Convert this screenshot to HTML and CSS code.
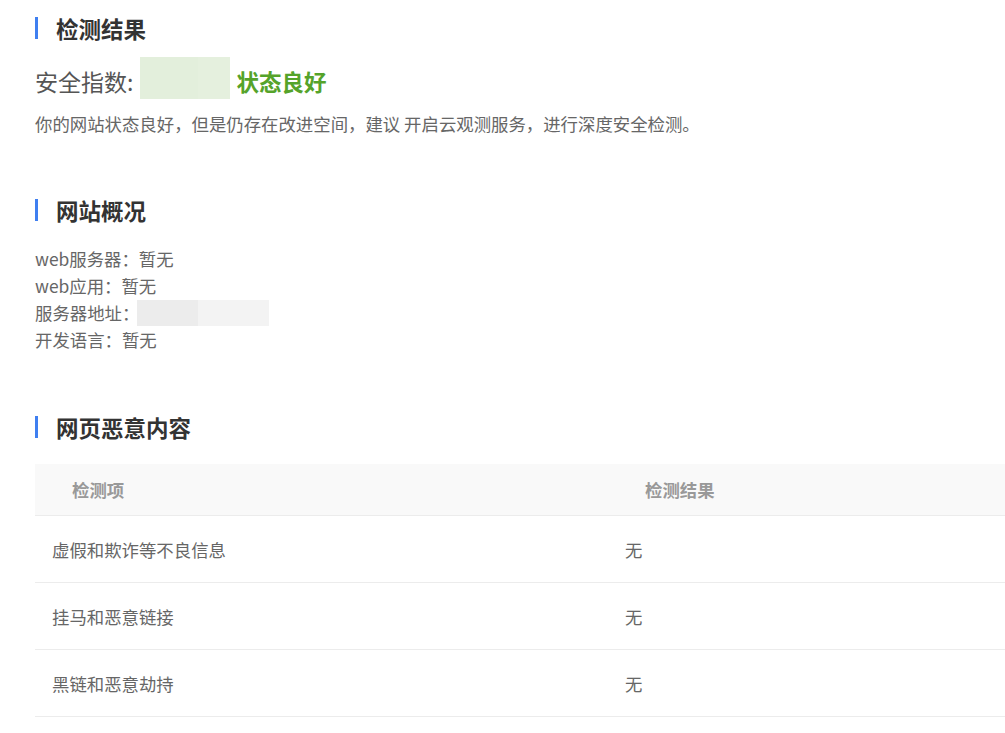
FILE: index.html
```html
<!DOCTYPE html>
<html>
<head>
    <meta charset="utf-8">
    <link rel="stylesheet" href="styles.css">
</head>

<body>
    <div class="report">
        <div class="section result">
            <h2 class="title">检测结果</h2>
            <div class="score-row">
                <span class="score-label">安全指数:</span>
                <span class="score-box"><span class="score-a"></span><span class="score-b"></span></span>
                <span class="score-state">状态良好</span>
            </div>
            <p class="desc">你的网站状态良好，但是仍存在改进空间，建议 开启云观测服务，进行深度安全检测。</p>
        </div>

        <div class="section overview">
            <h2 class="title">网站概况</h2>
            <ul class="info">
                <li>web服务器：暂无</li>
                <li>web应用：暂无</li>
                <li>服务器地址：<span class="mask"><span class="mask-a"></span><span class="mask-b"></span></span></li>
                <li>开发语言：暂无</li>
            </ul>
        </div>

        <div class="section malicious">
            <h2 class="title">网页恶意内容</h2>
            <table class="check-table">
                <tr>
                    <th class="col-item">检测项</th>
                    <th>检测结果</th>
                </tr>
                <tr>
                    <td>虚假和欺诈等不良信息</td>
                    <td>无</td>
                </tr>
                <tr>
                    <td>挂马和恶意链接</td>
                    <td>无</td>
                </tr>
                <tr>
                    <td>黑链和恶意劫持</td>
                    <td>无</td>
                </tr>
            </table>
        </div>
    </div>
</body>

</html>
```

FILE: styles.css
```css
html, body{
    margin: 0;
    padding: 0;
    background: #fff;
}
body{
    font-family: "Noto Sans CJK SC", "Noto Sans", sans-serif;
    font-size: 17.4px;
    color: #666;
}
.report{
    padding-left: 35px;
    padding-top: 17px;
}
.title{
    margin: 0;
    height: 22px;
    line-height: 22px;
    font-size: 22.5px;
    font-weight: bold;
    color: #333;
    border-left: 3px solid #3f7ff0;
    padding-left: 18px;
}

/* 检测结果 */
.score-row{
    display: flex;
    align-items: flex-end;
    margin-top: 18px;
    height: 42px;
}
.score-label{
    font-size: 23px;
    line-height: 36px;
    color: #555;
}
.score-box{
    display: flex;
    width: 90px;
    height: 42px;
    margin-left: 7px;
}
.score-a{
    width: 58px;
    background-color: #e3efdc;
}
.score-b{
    flex: 1;
    background-color: #e5f0de;
}
.score-state{
    margin-left: 6px;
    font-size: 22.5px;
    line-height: 36px;
    font-weight: bold;
    color: #55a32a;
}
.desc{
    margin: 13px 0 0 0;
    line-height: 24px;
}

/* 网站概况 */
.overview{
    margin-top: 63px;
}
.info{
    list-style: none;
    margin: 24px 0 0 0;
    padding: 0;
}
.info li{
    height: 27px;
    line-height: 27px;
    display: flex;
    align-items: center;
}
.mask{
    display: flex;
    height: 26px;
    width: 132px;
    margin-left: -2px;
}
.mask-a{
    width: 61px;
    background-color: #ececec;
}
.mask-b{
    flex: 1;
    background-color: #f3f3f3;
}

/* 网页恶意内容 */
.malicious{
    margin-top: 63px;
}
.check-table{
    margin-top: 26px;
    width: 100%;
    border-collapse: collapse;
}
.check-table th{
    height: 51px;
    padding: 0 0 0 37px;
    text-align: left;
    font-weight: bold;
    color: #999;
    background-color: #f9f9f9;
    border-bottom: 1px solid #ececec;
}
.check-table .col-item{
    width: 536px;
}
.check-table td{
    height: 66px;
    padding: 0 0 0 17px;
    border-bottom: 1px solid #ececec;
}
```
